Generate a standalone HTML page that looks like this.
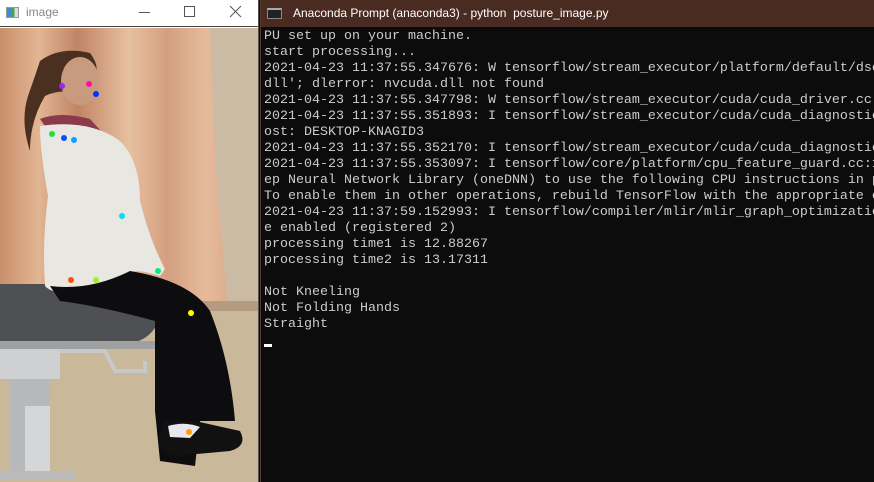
<!DOCTYPE html>
<html><head><style>
*{margin:0;padding:0;box-sizing:border-box}
body{width:874px;height:482px;overflow:hidden;background:#0c0c0c;position:relative;font-family:"Liberation Sans",sans-serif}
#imgwin{position:absolute;left:0;top:0;width:259px;height:482px;background:#fff;border-right:1px solid #555}
#imgtitle{height:27px;background:#fff;border-bottom:1px solid #444;position:relative;font-size:12px;color:#888}
#pic{position:absolute;left:0;top:28px;width:258px;height:454px;overflow:hidden}
#term{position:absolute;left:260px;top:0;width:614px;height:482px;background:#0c0c0c;border-left:1px solid #5a3a30;overflow:hidden}
#ttitle{height:27px;background:#4a2b22;color:#fff;font-size:12px;position:relative}
pre{position:absolute;left:3px;top:29px;font-family:"Liberation Mono",monospace;font-size:13.33px;line-height:16px;color:#cccccc;white-space:pre}
</style></head><body>
<div id="imgwin">
 <div id="imgtitle">
  <div style="position:absolute;left:6px;top:7px;width:13px;height:11px;border:1px solid #999;background:linear-gradient(90deg,#3a8fd0 0 40%,#50a050 40% 70%,#ddd 70%)"></div>
  <span style="position:absolute;left:26px;top:5px">image</span>
  <div style="position:absolute;left:139px;top:12px;width:11px;height:1px;background:#555"></div>
  <div style="position:absolute;left:184px;top:6px;width:11px;height:11px;border:1px solid #555"></div>
  <svg style="position:absolute;left:229px;top:5px" width="13" height="13"><path d="M1 1L12 12M12 1L1 12" stroke="#555" stroke-width="1"/></svg>
 </div>
 <div id="pic">
 <svg width="258" height="454" viewBox="0 27 258 454">
  <defs>
   <linearGradient id="cur" x1="0" x2="1">
    <stop offset="0" stop-color="#c98f6c"/><stop offset="0.15" stop-color="#e2b593"/><stop offset="0.3" stop-color="#c08566"/><stop offset="0.5" stop-color="#e7c0a0"/><stop offset="0.65" stop-color="#d39f80"/><stop offset="0.8" stop-color="#e6bb9c"/><stop offset="1" stop-color="#cf9a7a"/>
   </linearGradient>
  </defs>
  <rect x="0" y="27" width="258" height="300" fill="url(#cur)"/>
  <path d="M210 27H258V310H228L216 170Z" fill="#cbbba4"/>
  <rect x="0" y="305" width="258" height="176" fill="#c9b89a"/>
  <rect x="0" y="300" width="258" height="10" fill="#b59b80"/>
  <path d="M0 283H150Q162 290 160 318Q150 340 130 342H0Z" fill="#4e5054"/>
  <rect x="0" y="340" width="160" height="8" fill="#9fa0a2"/>
  <rect x="0" y="348" width="60" height="30" fill="#cfd0d2"/>
  <rect x="10" y="378" width="40" height="100" fill="#b7b8ba"/>
  <rect x="25" y="405" width="25" height="70" fill="#d5d6d8"/>
  <path d="M60 350L105 350L115 370H145V360" stroke="#c8c8c8" stroke-width="4" fill="none"/>
  <rect x="0" y="470" width="75" height="8" fill="#bbb"/>
  <path d="M40 60Q60 45 90 52Q100 65 95 75L70 90Q55 90 45 95Q30 120 30 150Q20 120 28 95Q35 75 40 60Z" fill="#4a3020"/>
  <ellipse cx="80" cy="80" rx="19" ry="24" fill="#c89a7e"/>
  <path d="M40 118Q60 110 90 118L110 140L85 130L45 125Z" fill="#8a3a48"/>
  <path d="M40 125Q90 118 120 140Q140 160 140 200Q150 240 165 268L160 275Q130 265 128 275Q110 290 80 295Q50 292 45 285Q42 240 48 195Q40 150 40 125Z" fill="#e9e7e2"/>
  <path d="M50 285Q90 290 130 270Q190 280 210 310Q230 360 235 420L200 420L195 465L160 460L155 410L155 320Q100 305 60 300Z" fill="#0d0d10"/>
  <path d="M165 420H195L240 430Q248 445 230 450L175 455Q160 452 158 440Z" fill="#111"/>
  <path d="M168 425Q185 420 200 426L190 437L170 436Z" fill="#e8e6ee"/>
  <circle cx="62" cy="85" r="3" fill="#a020f0"/><circle cx="89" cy="83" r="3" fill="#ff10a0"/><circle cx="96" cy="93" r="3" fill="#0030ff"/>
  <circle cx="52" cy="133" r="3" fill="#20e040"/><circle cx="64" cy="137" r="3" fill="#0050ff"/><circle cx="74" cy="139" r="3" fill="#10a0ff"/>
  <circle cx="122" cy="215" r="3" fill="#00e0f0"/><circle cx="158" cy="270" r="3" fill="#00f080"/>
  <circle cx="71" cy="279" r="3" fill="#ff5010"/><circle cx="96" cy="279" r="3" fill="#a0f020"/>
  <circle cx="191" cy="312" r="3" fill="#ffff00"/><circle cx="189" cy="431" r="3" fill="#ffa000"/>
 </svg>
 </div>
</div>
<div id="term">
 <div id="ttitle">
  <div style="position:absolute;left:6px;top:8px;width:15px;height:11px;background:#222;border:1px solid #888;border-top:2px solid #aaa"></div>
  <span style="position:absolute;left:32px;top:6px">Anaconda Prompt (anaconda3) - python &nbsp;posture_image.py</span>
 </div>
<pre>PU set up on your machine.
start processing...
2021-04-23 11:37:55.347676: W tensorflow/stream_executor/platform/default/dso_loader.cc
dll'; dlerror: nvcuda.dll not found
2021-04-23 11:37:55.347798: W tensorflow/stream_executor/cuda/cuda_driver.cc:326] fail
2021-04-23 11:37:55.351893: I tensorflow/stream_executor/cuda/cuda_diagnostics.cc:169]
ost: DESKTOP-KNAGID3
2021-04-23 11:37:55.352170: I tensorflow/stream_executor/cuda/cuda_diagnostics.cc:176]
2021-04-23 11:37:55.353097: I tensorflow/core/platform/cpu_feature_guard.cc:142] This
ep Neural Network Library (oneDNN) to use the following CPU instructions in performanc
To enable them in other operations, rebuild TensorFlow with the appropriate compiler f
2021-04-23 11:37:59.152993: I tensorflow/compiler/mlir/mlir_graph_optimization_pass.cc
e enabled (registered 2)
processing time1 is 12.88267
processing time2 is 13.17311

Not Kneeling
Not Folding Hands
Straight
</pre>
 <div style="position:absolute;left:3px;top:344px;width:8px;height:3px;background:#fff"></div>
</div>
</body></html>
